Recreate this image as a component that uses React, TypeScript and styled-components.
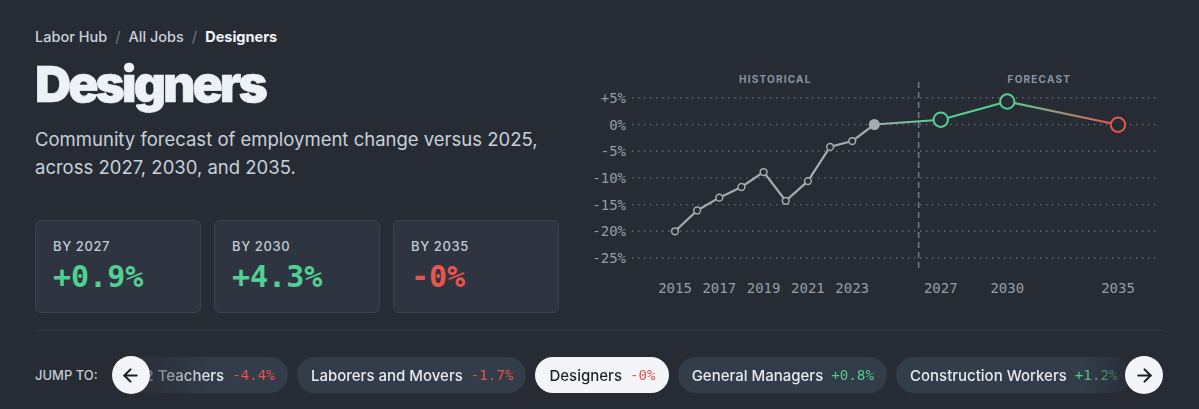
import React, { useLayoutEffect, useRef } from 'react';
import styled, { createGlobalStyle } from 'styled-components';
import { ArrowLeft, ArrowRight } from 'lucide-react';

const colors = {
  bg: '#272c34',
  card: '#2e3540',
  cardBorder: '#3b4350',
  chip: '#333c49',
  text: '#eef2f7',
  muted: '#c6ceda',
  faint: '#959ca6',
  green: '#52cf93',
  red: '#e8554c',
  gray: '#a7aaae',
};

const sans = `Inter, "Noto Sans", sans-serif`;
const mono = `"DejaVu Sans Mono", "Liberation Mono", monospace`;

const GlobalStyle = createGlobalStyle`
  html, body {
    margin: 0;
    background: ${colors.bg};
  }
  body {
    font-family: ${sans};
    color: ${colors.text};
  }
`;

const Page = styled.div`
  width: 1199px;
  height: 409px;
  box-sizing: border-box;
  padding: 27px 36px 0 35px;
  background: ${colors.bg};
  overflow: hidden;
`;

const Top = styled.section`
  display: grid;
  grid-template-columns: 524px 1fr;
  column-gap: 21px;
`;

const Intro = styled.div`
  display: flex;
  flex-direction: column;
`;

const Crumbs = styled.nav`
  display: flex;
  align-items: center;
  gap: 8px;
  font-size: 14.5px;
  line-height: 20px;
  font-weight: 500;
  color: #c9d1dc;
`;

const Crumb = styled.span<{ $current?: boolean }>`
  color: ${p => (p.$current ? '#f2f5f9' : '#c9d1dc')};
  font-weight: ${p => (p.$current ? 700 : 500)};
`;

const Slash = styled.span`
  color: #68717d;
`;

const Title = styled.h1`
  margin: 10px 0 0;
  font-size: 50px;
  line-height: 55px;
  font-weight: 900;
  letter-spacing: -3px;
  -webkit-text-stroke: 0.6px currentColor;
  color: ${colors.text};
`;

const Lede = styled.p`
  margin: 13px 0 0;
  font-size: 18.5px;
  line-height: 28px;
  color: #c8d0db;
`;

const Stats = styled.div`
  display: grid;
  grid-template-columns: repeat(3, 1fr);
  gap: 13px;
  margin-top: 39px;
`;

const StatCard = styled.div`
  box-sizing: border-box;
  height: 93px;
  padding: 17px 17px 0;
  background: ${colors.card};
  border: 1px solid ${colors.cardBorder};
  border-radius: 6px;
`;

const StatLabel = styled.div`
  font-size: 13px;
  line-height: 16px;
  font-weight: 500;
  letter-spacing: 0.6px;
  color: #c3cad5;
`;

const StatValue = styled.div<{ $tone: 'up' | 'down' }>`
  margin-top: 5px;
  font-family: ${mono};
  font-size: 30px;
  line-height: 36px;
  font-weight: 700;
  color: ${p => (p.$tone === 'up' ? colors.green : colors.red)};
`;

const ChartBox = styled.div`
  margin-top: 43px;
  height: 230px;
`;

const Divider = styled.hr`
  margin: 17px 0 0;
  border: 0;
  border-top: 1px solid #343b47;
`;

const JumpRow = styled.div`
  display: flex;
  align-items: center;
  gap: 14px;
  padding-top: 26px;
`;

const JumpLabel = styled.span`
  font-size: 13px;
  font-weight: 500;
  color: #c3cad5;
  white-space: nowrap;
`;

const Carousel = styled.div`
  position: relative;
  flex: 1;
  min-width: 0;
`;

const Track = styled.div`
  display: flex;
  gap: 9px;
  overflow: hidden;
  -webkit-mask-image: linear-gradient(to right, transparent 0, #000 100px, #000 calc(100% - 80px), transparent calc(100% - 20px));
  mask-image: linear-gradient(to right, transparent 0, #000 100px, #000 calc(100% - 80px), transparent calc(100% - 20px));
`;

const Chip = styled.a<{ $active?: boolean }>`
  flex: none;
  display: inline-flex;
  align-items: center;
  gap: 8px;
  height: 36px;
  padding: 0 13px 0 14px;
  border-radius: 18px;
  background: ${p => (p.$active ? '#f3f5f9' : colors.chip)};
  color: ${p => (p.$active ? '#1e232b' : '#e6eaf0')};
  font-size: 15px;
  font-weight: 500;
  white-space: nowrap;
  text-decoration: none;
`;

const ChipDelta = styled.span<{ $tone: 'up' | 'down' }>`
  font-family: ${mono};
  font-size: 14.2px;
  color: ${p => (p.$tone === 'up' ? '#55c98f' : '#e6534b')};
`;

const ArrowButton = styled.button<{ $side: 'left' | 'right' }>`
  position: absolute;
  top: -1px;
  ${p => (p.$side === 'left' ? 'left: 0;' : 'right: 0;')}
  width: 38px;
  height: 38px;
  padding: 0;
  display: flex;
  align-items: center;
  justify-content: center;
  border: 0;
  border-radius: 50%;
  background: #f3f5f9;
  color: #1b2027;
  cursor: pointer;
`;

const AxisText = styled.text`
  font-family: ${mono};
  font-size: 14px;
  fill: ${colors.faint};
`;

const ZoneText = styled.text`
  font-family: ${sans};
  font-size: 10px;
  font-weight: 700;
  letter-spacing: 1.2px;
  fill: #8794a6;
`;

type Point = { year: number; value: number };

const history: Point[] = [
  { year: 2015, value: -20 },
  { year: 2016, value: -16.1 },
  { year: 2017, value: -13.7 },
  { year: 2018, value: -11.7 },
  { year: 2019, value: -8.9 },
  { year: 2020, value: -14.3 },
  { year: 2021, value: -10.6 },
  { year: 2022, value: -4.2 },
  { year: 2023, value: -3.1 },
  { year: 2024, value: 0 },
];

const forecast: Point[] = [
  { year: 2027, value: 0.9 },
  { year: 2030, value: 4.3 },
  { year: 2035, value: -0.05 },
];

const xOf = (year: number) => 95 + (year - 2015) * 22.15;
const yOf = (v: number) => 54.5 - v * 5.34;

const ForecastChart: React.FC = () => {
  const ticks = [5, 0, -5, -10, -15, -20, -25];
  const years = [2015, 2017, 2019, 2021, 2023, 2027, 2030, 2035];
  const split = xOf(2026);
  const last = history[history.length - 1];
  const [f27, f30, f35] = forecast;

  return (
    <svg width="583" height="230" viewBox="0 0 583 230">
      <defs>
        <linearGradient id="bridge" gradientUnits="userSpaceOnUse" x1={xOf(last.year)} x2={xOf(f27.year)} y1="0" y2="0">
          <stop offset="0" stopColor={colors.gray} />
          <stop offset="1" stopColor={colors.green} />
        </linearGradient>
        <linearGradient id="decline" gradientUnits="userSpaceOnUse" x1={xOf(f30.year)} x2={xOf(f35.year)} y1="0" y2="0">
          <stop offset="0" stopColor={colors.green} />
          <stop offset="1" stopColor={colors.red} />
        </linearGradient>
      </defs>

      <ZoneText x={(52 + split) / 2} y="13" textAnchor="middle">HISTORICAL</ZoneText>
      <ZoneText x={(split + 580) / 2} y="13" textAnchor="middle">FORECAST</ZoneText>

      {ticks.map(t => (
        <g key={t}>
          <line x1="52" x2="580" y1={yOf(t)} y2={yOf(t)} stroke="#646c78" strokeWidth="1.4" strokeDasharray="1.4 4.6" />
          <AxisText x="46" y={yOf(t) + 5} textAnchor="end">
            {t > 0 ? `+${t}%` : `${t}%`}
          </AxisText>
        </g>
      ))}

      <line x1={split} x2={split} y1="12" y2="202" stroke="#737b87" strokeWidth="1.5" strokeDasharray="6 4" />

      {years.map(y => (
        <AxisText key={y} x={xOf(y)} y="223" textAnchor="middle">{y}</AxisText>
      ))}

      <polyline
        points={history.map(p => `${xOf(p.year)},${yOf(p.value)}`).join(' ')}
        fill="none"
        stroke={colors.gray}
        strokeWidth="2.2"
        strokeLinejoin="round"
      />
      <line x1={xOf(last.year)} y1={yOf(last.value)} x2={xOf(f27.year)} y2={yOf(f27.value)} stroke="url(#bridge)" strokeWidth="2" />
      <line x1={xOf(f27.year)} y1={yOf(f27.value)} x2={xOf(f30.year)} y2={yOf(f30.value)} stroke={colors.green} strokeWidth="2.2" />
      <line x1={xOf(f30.year)} y1={yOf(f30.value)} x2={xOf(f35.year)} y2={yOf(f35.value)} stroke="url(#decline)" strokeWidth="2.2" />

      {history.slice(0, -1).map(p => (
        <circle key={p.year} cx={xOf(p.year)} cy={yOf(p.value)} r="3.4" fill={colors.bg} stroke={colors.gray} strokeWidth="1.5" />
      ))}
      <circle cx={xOf(last.year)} cy={yOf(last.value)} r="5.5" fill={colors.gray} />

      {forecast.map(p => (
        <circle
          key={p.year}
          cx={xOf(p.year)}
          cy={yOf(p.value)}
          r="7.2"
          fill={colors.bg}
          stroke={p.value >= 0 ? colors.green : colors.red}
          strokeWidth="2"
        />
      ))}
    </svg>
  );
};

const stats = [
  { label: 'BY 2027', value: '+0.9%', tone: 'up' as const },
  { label: 'BY 2030', value: '+4.3%', tone: 'up' as const },
  { label: 'BY 2035', value: '-0%', tone: 'down' as const },
];

const jobs = [
  { name: 'Registered Nurses', delta: '+2.1%' },
  { name: 'K-12 Teachers', delta: '-4.4%' },
  { name: 'Laborers and Movers', delta: '-1.7%' },
  { name: 'Designers', delta: '-0%' },
  { name: 'General Managers', delta: '+0.8%' },
  { name: 'Construction Workers', delta: '+1.2%' },
  { name: 'Software Developers', delta: '-3.6%' },
];

const ACTIVE = 'Designers';

export default function App() {
  const trackRef = useRef<HTMLDivElement>(null);

  // keep the current job a little left of centre in the strip
  useLayoutEffect(() => {
    const track = trackRef.current;
    if (!track) return;
    const active = track.querySelector<HTMLElement>('[data-active="true"]');
    if (active) track.scrollLeft = active.offsetLeft - track.offsetLeft - 424;
  }, []);

  return (
    <>
      <GlobalStyle />
      <Page>
        <Top>
          <Intro>
            <Crumbs>
              <Crumb>Labor Hub</Crumb>
              <Slash>/</Slash>
              <Crumb>All Jobs</Crumb>
              <Slash>/</Slash>
              <Crumb $current>Designers</Crumb>
            </Crumbs>
            <Title>Designers</Title>
            <Lede>
              Community forecast of employment change versus 2025, across 2027, 2030, and 2035.
            </Lede>
            <Stats>
              {stats.map(s => (
                <StatCard key={s.label}>
                  <StatLabel>{s.label}</StatLabel>
                  <StatValue $tone={s.tone}>{s.value}</StatValue>
                </StatCard>
              ))}
            </Stats>
          </Intro>
          <ChartBox>
            <ForecastChart />
          </ChartBox>
        </Top>

        <Divider />

        <JumpRow>
          <JumpLabel>JUMP TO:</JumpLabel>
          <Carousel>
            <Track ref={trackRef}>
              {jobs.map(j => (
                <Chip key={j.name} $active={j.name === ACTIVE} data-active={j.name === ACTIVE}>
                  {j.name}
                  <ChipDelta $tone={j.delta.startsWith('+') ? 'up' : 'down'}>{j.delta}</ChipDelta>
                </Chip>
              ))}
            </Track>
            <ArrowButton $side="left" aria-label="Previous">
              <ArrowLeft size={21} strokeWidth={2.4} />
            </ArrowButton>
            <ArrowButton $side="right" aria-label="Next">
              <ArrowRight size={21} strokeWidth={2.4} />
            </ArrowButton>
          </Carousel>
        </JumpRow>
      </Page>
    </>
  );
}
